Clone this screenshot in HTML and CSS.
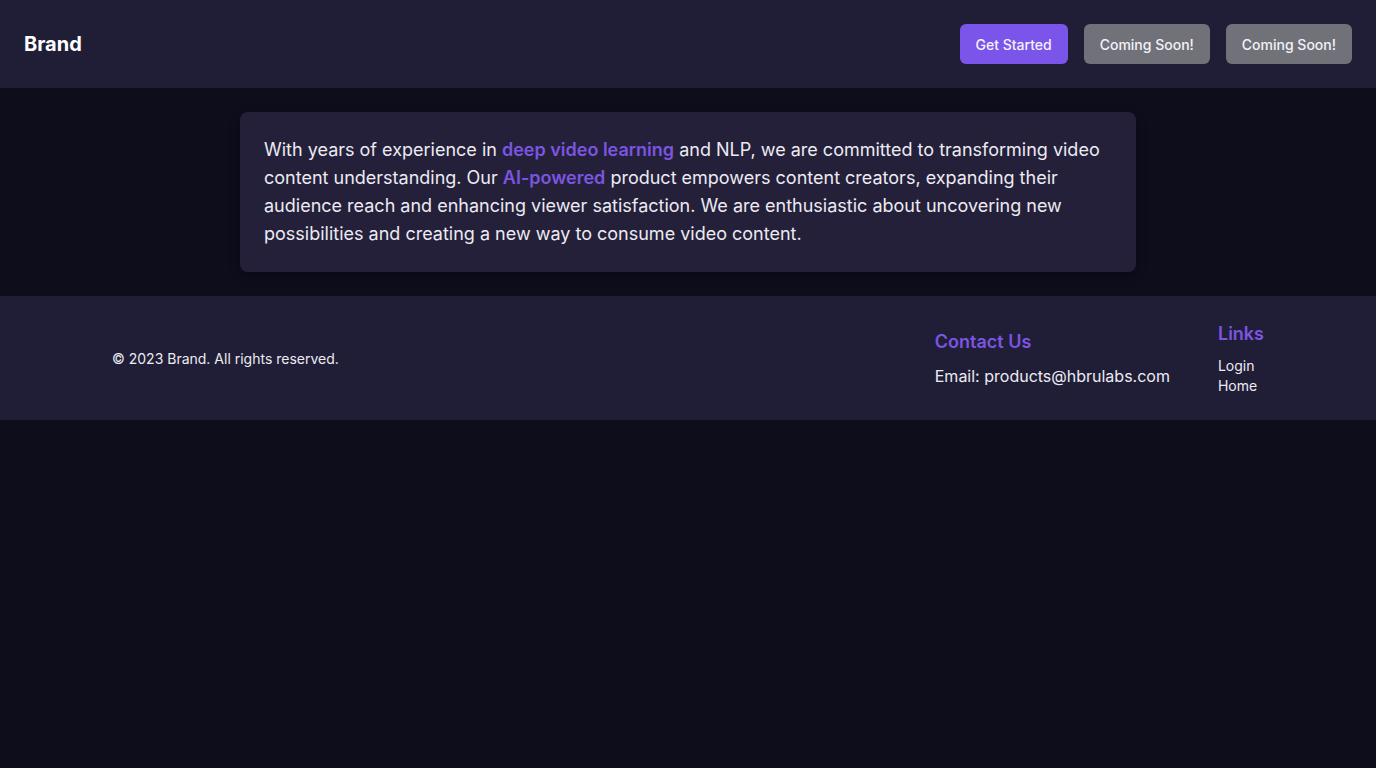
FILE: index.html
```html
<!DOCTYPE html>
<html lang="en">
<head>
<meta charset="utf-8">
<title>Brand</title>
<link rel="stylesheet" href="styles.css">
</head>
<body>
<header class="topbar">
  <div class="brand">Brand</div>
  <nav class="actions">
    <a class="btn btn-primary" href="#">Get Started</a>
    <a class="btn btn-muted" href="#">Coming Soon!</a>
    <a class="btn btn-muted" href="#">Coming Soon!</a>
  </nav>
</header>
<main class="main">
  <section class="card">
    <p>With years of experience in <span class="hl">deep video learning</span> and NLP, we are committed to transforming video content understanding. Our <span class="hl">AI-powered</span> product empowers content creators, expanding their audience reach and enhancing viewer satisfaction. We are enthusiastic about uncovering new possibilities and creating a new way to consume video content.</p>
  </section>
</main>
<footer class="footer">
  <div class="footer-inner">
    <div class="copy">© 2023 Brand. All rights reserved.</div>
    <div class="footer-cols">
      <div class="col">
        <h3 class="col-title">Contact Us</h3>
        <p class="email">Email: products@hbrulabs.com</p>
      </div>
      <div class="col">
        <h3 class="col-title">Links</h3>
        <ul class="links">
          <li><a href="#">Login</a></li>
          <li><a href="#">Home</a></li>
        </ul>
      </div>
    </div>
  </div>
</footer>
</body>
</html>
```
FILE: styles.css
```css
* { box-sizing: border-box; }
html, body { margin: 0; padding: 0; }
body {
  background: #0e0d1c;
  color: #f1f0f5;
  font-family: Inter, "Noto Sans", sans-serif;
  min-height: 768px;
}
.topbar {
  height: 88px;
  background: #201e36;
  display: flex;
  align-items: center;
  justify-content: space-between;
  padding: 0 24px;
}
.brand {
  font-size: 20px;
  font-weight: 700;
  color: #ffffff;
}
.actions {
  display: flex;
  gap: 16px;
}
.btn {
  display: inline-flex;
  align-items: center;
  height: 40px;
  padding: 0 16px;
  border-radius: 6px;
  font-size: 14px;
  font-weight: 500;
  color: #f3f2f8;
  text-decoration: none;
}
.btn-primary { background: #7b55ea; }
.btn-muted { background: #71717a; }
.main {
  padding: 24px 0;
  display: flex;
  justify-content: center;
}
.card {
  width: 896px;
  background: #24203a;
  border-radius: 8px;
  padding: 24px;
  box-shadow: 0 4px 12px rgba(0,0,0,0.3);
}
.card p {
  margin: 0;
  font-size: 18px;
  line-height: 28px;
  color: #ecebf2;
}
.hl {
  color: #7b55e0;
  font-weight: 600;
}
.footer {
  background: #201e36;
  padding: 24px 0;
}
.footer-inner {
  max-width: 1152px;
  margin: 0 auto;
  display: flex;
  align-items: center;
  justify-content: space-between;
}
.copy {
  font-size: 14px;
  color: #ecebf2;
}
.footer-cols {
  display: flex;
  align-items: center;
  gap: 48px;
}
.col-title {
  margin: 0 0 8px;
  font-size: 18px;
  line-height: 28px;
  font-weight: 600;
  color: #7b55e0;
}
.email {
  margin: 0;
  font-size: 16px;
  line-height: 24px;
  color: #ecebf2;
}
.links {
  list-style: none;
  margin: 0;
  padding: 0;
  font-size: 14px;
  line-height: 20px;
}
.links a {
  color: #ecebf2;
  text-decoration: none;
}
```
